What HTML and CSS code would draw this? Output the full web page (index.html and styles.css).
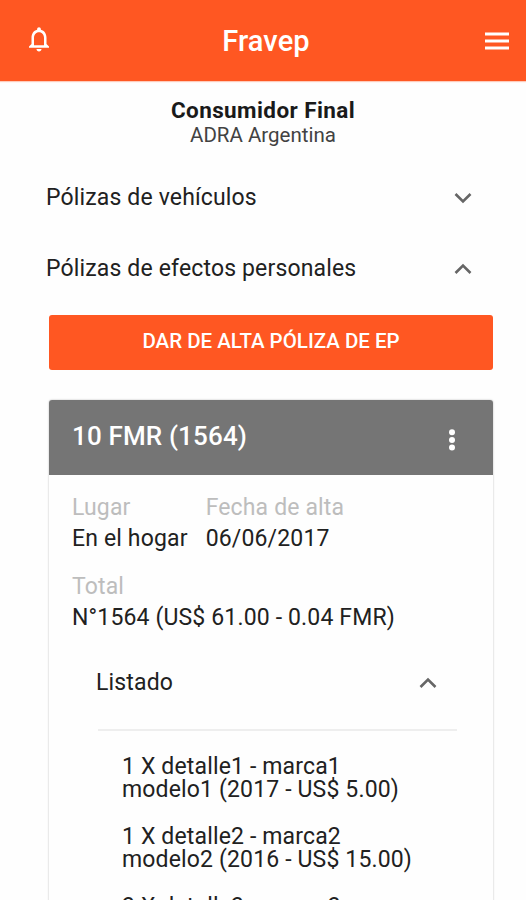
FILE: index.html
```html
<!DOCTYPE html>
<html lang="es">
<head>
    <meta charset="UTF-8">
    <meta name="viewport" content="width=device-width, initial-scale=1.0">
    <title>Fravep</title>
    <link rel="stylesheet" href="styles.css">
</head>
<body>
    <header class="toolbar">
        <svg class="icon-bell" viewBox="0 0 24 24"><path d="M12 22c1.1 0 2-.9 2-2h-4c0 1.1.9 2 2 2zm6-6v-5c0-3.07-1.63-5.64-4.5-6.32V4c0-.83-.67-1.5-1.5-1.5s-1.5.67-1.5 1.5v.68C7.64 5.36 6 7.92 6 11v5l-2 2v1h16v-1l-2-2zm-2 1H8v-6c0-2.48 1.51-4.5 4-4.5s4 2.02 4 4.5v6z"/></svg>
        <h1>Fravep</h1>
        <svg class="icon-menu" viewBox="0 0 24 24"><path d="M0 3.5h24v3H0zM0 10.5h24v3H0zM0 17.5h24v3H0z"/></svg>
    </header>

    <main class="content">
        <div class="user">
            <div class="user-name">Consumidor Final</div>
            <div class="user-org">ADRA Argentina</div>
        </div>

        <div class="panel-header">
            <span class="panel-title">Pólizas de vehículos</span>
            <svg class="chevron" viewBox="0 0 18 12"><path d="M1.5 2L9 9.5L16.5 2"/></svg>
        </div>
        <div class="panel-header">
            <span class="panel-title">Pólizas de efectos personales</span>
            <svg class="chevron" viewBox="0 0 18 12"><path d="M1.5 10L9 2.5L16.5 10"/></svg>
        </div>

        <button class="btn-alta">DAR DE ALTA PÓLIZA DE EP</button>

        <div class="card">
            <div class="card-header">
                <h2>10 FMR (1564)</h2>
                <svg class="icon-more" viewBox="0 0 8 22"><circle cx="4" cy="3.3" r="3"/><circle cx="4" cy="10.9" r="3"/><circle cx="4" cy="18.5" r="3"/></svg>
            </div>
            <div class="card-body">
                <div class="field-row">
                    <div class="field">
                        <div class="label">Lugar</div>
                        <div class="value">En el hogar</div>
                    </div>
                    <div class="field">
                        <div class="label">Fecha de alta</div>
                        <div class="value">06/06/2017</div>
                    </div>
                </div>
                <div class="field">
                    <div class="label">Total</div>
                    <div class="value">N°1564 (US$ 61.00 - 0.04 FMR)</div>
                </div>

                <div class="list-header">
                    <span>Listado</span>
                    <svg class="chevron" viewBox="0 0 18 12"><path d="M1.5 10L9 2.5L16.5 10"/></svg>
                </div>
                <ul class="list">
                    <li>1 X detalle1 - marca1<br>modelo1 (2017 - US$ 5.00)</li>
                    <li>1 X detalle2 - marca2<br>modelo2 (2016 - US$ 15.00)</li>
                    <li>3 X detalle3 - marca3</li>
                </ul>
            </div>
        </div>
    </main>
</body>
</html>
```
FILE: styles.css
```css
* {
    box-sizing: border-box;
}

body {
    margin: 0;
    height: 900px;
    overflow: hidden;
    font-family: Roboto, sans-serif;
    font-size: 23px;
    letter-spacing: 0.15px;
    color: #212121;
    background-color: #fefefe;
}

.toolbar {
    display: flex;
    align-items: center;
    justify-content: space-between;
    height: 81px;
    padding: 0 17px 0 24px;
    background-color: #ff5722;
    box-shadow: 0 1px 1px rgba(255, 87, 34, 0.3);
}

.toolbar h1 {
    margin: 1px 7px 0 0;
    font-size: 29px;
    font-weight: 500;
    letter-spacing: 0.1px;
    color: #fff;
}

.toolbar svg {
    fill: #fff;
}

.icon-bell {
    width: 30px;
    height: 30px;
    margin-bottom: 3px;
}

.icon-menu {
    width: 24px;
    height: 24px;
}

.user {
    height: 81px;
    padding-top: 17px;
    text-align: center;
}

.user-name {
    font-size: 22.5px;
    line-height: 25px;
    font-weight: 700;
    letter-spacing: 0.4px;
    color: #1a1a1a;
}

.user-org {
    font-size: 20.5px;
    line-height: 24px;
    letter-spacing: 0;
    color: #424242;
}

.panel-header {
    display: flex;
    align-items: center;
    justify-content: space-between;
    height: 71px;
    padding: 0 54px 0 46px;
}

.chevron {
    width: 18px;
    height: 12px;
    fill: none;
    stroke: #666;
    stroke-width: 2.6;
}

.btn-alta {
    display: block;
    width: 444px;
    height: 55px;
    margin: 11px 0 30px 49px;
    padding: 0 0 3px;
    border: none;
    border-radius: 3px;
    font-family: inherit;
    font-size: 20.5px;
    font-weight: 500;
    color: #fff;
    background-color: #ff5722;
}

.card {
    width: 444px;
    height: 540px;
    margin-left: 49px;
    border-radius: 3px;
    background-color: #fefefe;
    box-shadow: 0 0 2px rgba(0, 0, 0, 0.3);
}

.card-header {
    display: flex;
    align-items: center;
    justify-content: space-between;
    height: 75px;
    padding: 0 37px 0 23px;
    border-radius: 3px 3px 0 0;
    color: #fff;
    background-color: #757575;
}

.card-header h2 {
    margin: 0 0 4px;
    font-size: 26px;
    font-weight: 500;
}

.icon-more {
    width: 8px;
    height: 22px;
    margin-top: 5px;
    fill: #fff;
}

.card-body {
    padding: 17px 24px 17px 23px;
}

.field-row {
    display: flex;
    gap: 18px;
}

.field {
    height: 79px;
}

.field .label {
    line-height: 31px;
    color: #bdbdbd;
}

.field .value {
    line-height: 31px;
    white-space: nowrap;
}

.list-header {
    display: flex;
    align-items: center;
    justify-content: space-between;
    height: 81px;
    margin: 0 12px 0 26px;
    padding: 0 20px 14px 0;
    border-bottom: 2px solid #eee;
}

.list-header span {
    margin-left: -2px;
}

.list {
    margin: 0;
    padding: 23.5px 0 0 50px;
    list-style: none;
}

.list li {
    margin-bottom: 23px;
    line-height: 23.5px;
    white-space: nowrap;
}
```
